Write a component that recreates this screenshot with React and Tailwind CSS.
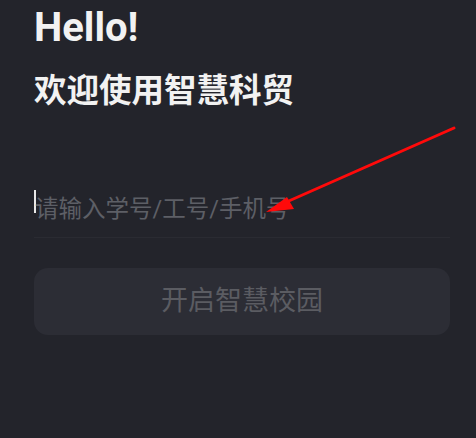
export default function App() {
  return (
    <div
      className="relative w-[476px] h-[438px] overflow-hidden bg-[#23242b] pl-[34px]"
      style={{ fontFamily: 'Roboto, "Noto Sans CJK SC", sans-serif' }}
    >
      <div className="w-[416px]">
        <h1 className="pt-[5px] text-[40px] font-bold leading-[46px] text-[#f2f2f2]">Hello!</h1>
        <h2 className="mt-[20px] text-[32.5px] font-bold leading-[40px] text-[#f2f2f2]">欢迎使用智慧科贸</h2>
        <div className="mt-[78px] flex items-start h-[49px] border-b border-[#2a2b32]">
          <span className="mt-[1px] w-[2px] h-[23px] bg-[#e8e8e8] mr-[-1px]"></span>
          <span className="mt-[4px] text-[23.5px] leading-[32px] text-[#5d5f66]">请输入学号/工号/手机号</span>
        </div>
        <button className="mt-[30px] w-full h-[67px] rounded-[14px] bg-[#2c2d35] text-[27px] text-[#5b5c62] flex items-center justify-center">
          开启智慧校园
        </button>
      </div>
      <svg className="absolute left-0 top-0" width="476" height="438" viewBox="0 0 476 438">
        <line x1="454" y1="128" x2="282" y2="204" stroke="#ff0a0a" strokeWidth="3" strokeLinecap="round" />
        <polygon points="266,212 287,197 294,209" fill="#ff0a0a" />
      </svg>
    </div>
  );
}
